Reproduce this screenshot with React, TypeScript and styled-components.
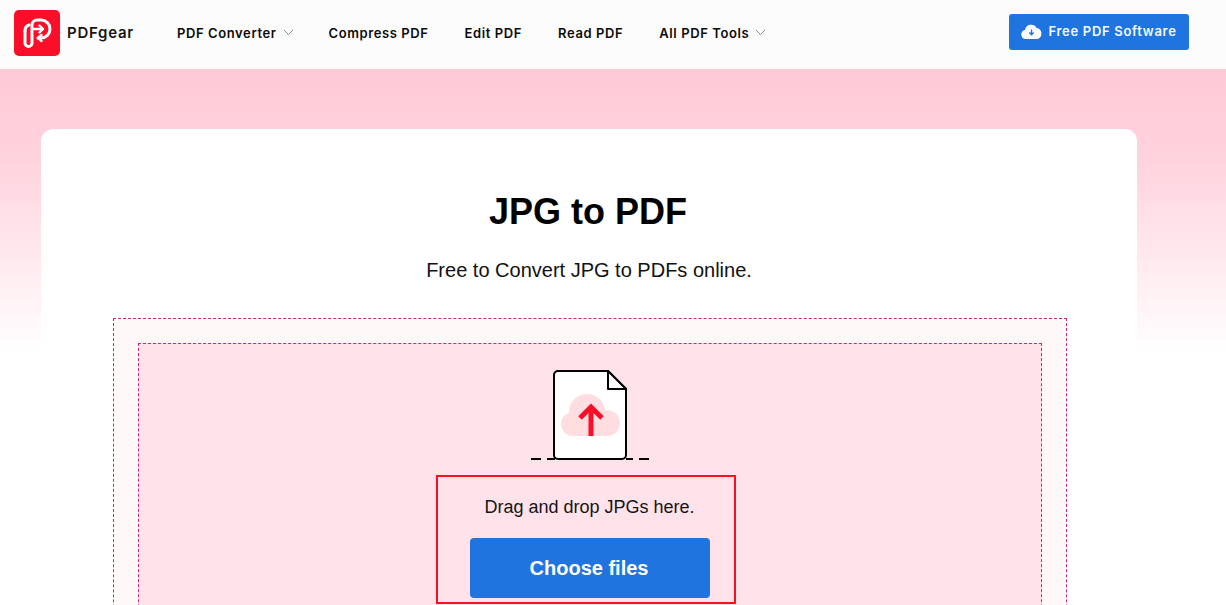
import React from "react";
import styled, { createGlobalStyle } from "styled-components";

const Global = createGlobalStyle`
  html, body { margin: 0; padding: 0; height: 605px; overflow: hidden; background: #fff; }
  * { box-sizing: border-box; }
`;
const Page = styled.div`
  height: 605px;
  overflow: hidden;
  font-family: "Liberation Sans", Arial, sans-serif;
`;
const Header = styled.header`
  height: 69px;
  background: #fcfcfc;
  display: flex;
  align-items: center;
  padding: 0 37px 0 14px;
`;
const Brand = styled.div`
  display: flex;
  align-items: center;
  gap: 7px;
  width: 163px;
  margin-top: -3px;
`;
const BrandName = styled.span`
  font: 600 15px Inter, sans-serif;
  color: #151515;
  letter-spacing: 0.75px;
  margin-top: -1px;
`;
const Nav = styled.nav`
  display: flex;
  align-items: center;
  gap: 36px;
  flex: 1;
  margin-top: -4px;
`;
const NavItem = styled.a`
  display: flex;
  align-items: center;
  gap: 6px;
  font: 600 13px Inter, sans-serif;
  color: #0b0b0b;
  letter-spacing: 0.6px;
`;
const ChevronIcon = styled.svg`
  margin-right: -1px;
`;
const Download = styled.a`
  width: 180px;
  height: 36px;
  margin-top: -5px;
  padding-bottom: 2px;
  background: #1f74e0;
  border-radius: 3px;
  color: #f4f8ff;
  font: 600 13px Inter, sans-serif;
  letter-spacing: 0.7px;
  display: flex;
  align-items: center;
  justify-content: center;
  gap: 6px;
`;
const Hero = styled.main`
  height: 536px;
  padding: 60px 89px 0 41px;
  background: linear-gradient(#ffc9d6 0, #ffd3de 90px, #fff 285px);
`;
const Card = styled.section`
  height: 600px;
  background: #fff;
  border-radius: 12px;
  padding: 62px 70px 0 72px;
  display: flex;
  flex-direction: column;
  align-items: center;
`;
const Title = styled.h1`
  margin: 0 4px 0 0;
  font: 700 36px/42px "Liberation Sans", Arial, sans-serif;
  color: #000;
`;
const Subtitle = styled.p`
  margin: 25px 2px 0 0;
  font: 400 20px/24px "Liberation Sans", Arial, sans-serif;
  color: #111;
`;
const Outer = styled.div`
  width: 954px;
  margin-top: 36px;
  height: 400px;
  padding: 24px;
  background: #fff8f9;
  border: 1px dashed #c12a83;
`;
const Inner = styled.div`
  height: 400px;
  background: #ffe2ea;
  border: 1px dashed #c12a83;
  display: flex;
  flex-direction: column;
  align-items: center;
  padding-top: 26px;
`;
const DropArea = styled.div`
  width: 300px;
  height: 129px;
  margin: 13px 8px 0 0;
  padding: 20px 0 0 8px;
  border: 2px solid #f5131f;
  display: flex;
  flex-direction: column;
  align-items: center;
`;
const Hint = styled.p`
  margin: 0 1px 0 0;
  font: 400 18px/21px "Liberation Sans", Arial, sans-serif;
  color: #151515;
`;
const Choose = styled.button`
  margin-top: 20px;
  width: 240px;
  height: 60px;
  padding: 0 2px 0 0;
  border: 0;
  border-radius: 4px;
  background: #1f74e0;
  color: #fff;
  font: 700 20px "Liberation Sans", Arial, sans-serif;
`;

const Logo = () => (
  <svg width="46" height="46" viewBox="0 0 46 46">
    <rect width="46" height="46" rx="5" fill="#fb0f28" />
    <path d="M11 21a6 6 0 0 1 4-6" fill="none" stroke="#fff" strokeWidth="3" strokeLinecap="round" />
    <path d="M11 21v12a3.500 3.500 0 0 0 7 0V15a5 5 0 0 1 5-5h4a9 9 0 0 1 0 18h-3" fill="none" stroke="#fff" strokeWidth="3" strokeLinecap="round" />
    <path d="M20 19h9M25.500 15.500l3.500 3.500-3.500 3.500M27.500 25l-3.500 3 3.500 3" fill="none" stroke="#fff" strokeWidth="2.400" strokeLinecap="round" strokeLinejoin="round" />
  </svg>
);
const Chevron = () => (
  <ChevronIcon width="11" height="7" viewBox="0 0 11 7">
    <path d="M1 1l4.500 4.500L10 1" fill="none" stroke="#8a8a8a" strokeWidth="1" />
  </ChevronIcon>
);
const CloudDown = () => (
  <svg width="21" height="16" viewBox="0 0 21 16">
    <path d="M5 16a4.600 4.600 0 0 1-1-9.100A6.200 6.200 0 0 1 15.600 5 5.600 5.600 0 0 1 16 16z" fill="#fff" />
    <path d="M10.500 6.500v5M8.300 9.600l2.200 2.200 2.200-2.200" fill="none" stroke="#1f74e0" strokeWidth="1.400" />
  </svg>
);
const FileUpload = () => (
  <svg width="120" height="92" viewBox="0 0 120 92" style={{ display: "block" }}>
    <path d="M1 89h10M17 89h8M96 89h7M109 89h10" stroke="#000" strokeWidth="2" />
    <path d="M28 1h50l18 18v66a4 4 0 0 1-4 4H28a4 4 0 0 1-4-4V5a4 4 0 0 1 4-4z" fill="#fff" stroke="#000" strokeWidth="2" strokeLinejoin="round" />
    <path d="M78 1l18 18H78z" fill="#fff" stroke="#000" strokeWidth="2" strokeLinejoin="round" />
    <g fill="#ffdde1">
      <circle cx="57" cy="42" r="18" />
      <circle cx="43" cy="54" r="12" />
      <circle cx="77" cy="53" r="13" />
      <rect x="43" y="50" width="34" height="16" />
    </g>
    <path d="M61 66V37M50 48l11-11 11 11" fill="none" stroke="#fb0f28" strokeWidth="5" />
  </svg>
);

export default function App() {
  return (
    <Page>
      <Global />
      <Header>
        <Brand>
          <Logo />
          <BrandName>PDFgear</BrandName>
        </Brand>
        <Nav>
          <NavItem>PDF Converter <Chevron /></NavItem>
          <NavItem>Compress PDF</NavItem>
          <NavItem>Edit PDF</NavItem>
          <NavItem>Read PDF</NavItem>
          <NavItem>All PDF Tools <Chevron /></NavItem>
        </Nav>
        <Download><CloudDown />Free PDF Software</Download>
      </Header>
      <Hero>
        <Card>
          <Title>JPG to PDF</Title>
          <Subtitle>Free to Convert JPG to PDFs online.</Subtitle>
          <Outer>
            <Inner>
              <FileUpload />
              <DropArea>
                <Hint>Drag and drop JPGs here.</Hint>
                <Choose>Choose files</Choose>
              </DropArea>
            </Inner>
          </Outer>
        </Card>
      </Hero>
    </Page>
  );
}
